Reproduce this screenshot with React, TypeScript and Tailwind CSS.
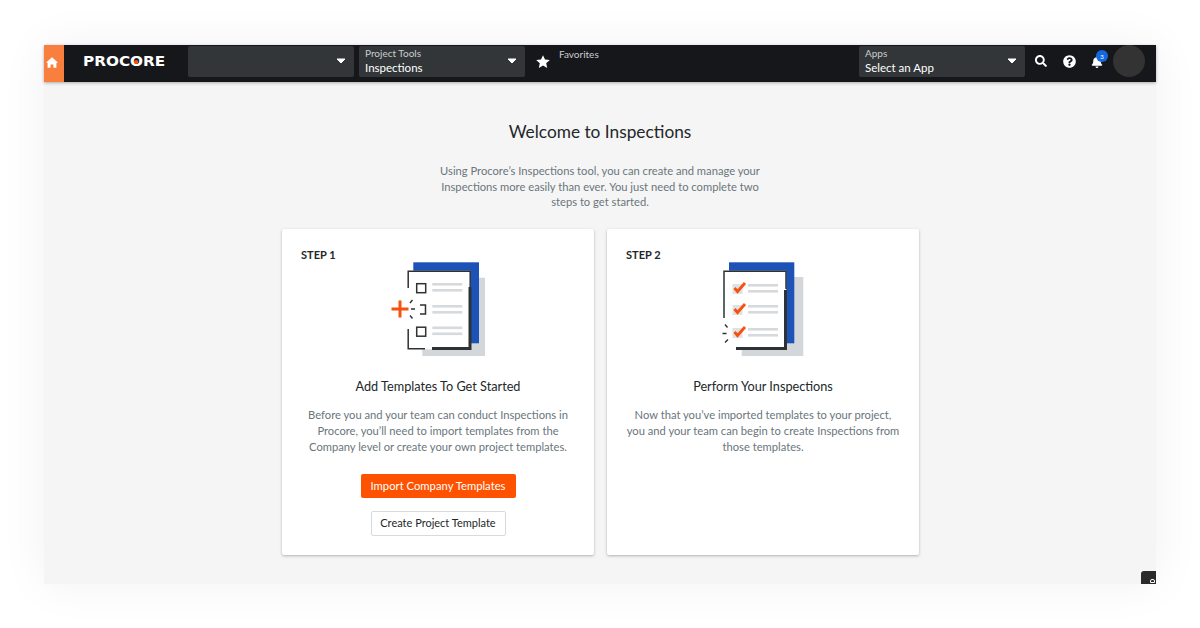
import { FaBell, FaQuestionCircle, FaSearch } from 'react-icons/fa';

const Caret = () => (
  <svg width="10" height="6" viewBox="0 0 10 6" className="shrink-0">
    <path d="M1 1H9L5 5Z" fill="#ffffff" stroke="#ffffff" strokeWidth="1" strokeLinejoin="round" />
  </svg>
);

const Selector = ({ label, value, className }: { label?: string; value?: string; className: string }) => (
  <div className={`flex h-[31px] w-[166px] shrink-0 items-center justify-between rounded-[2px] bg-[#333638] pl-[6px] pr-[8px] ${className}`}>
    <div className="flex flex-col text-white">
      {label && <span className="text-[10px] leading-[11px] text-[#c9cdcf]">{label}</span>}
      {value && <span className="mt-[1px] text-[11.5px] leading-[15px]">{value}</span>}
    </div>
    <Caret />
  </div>
);

const PaperLines = ({ x, ys }: { x: number; ys: number[] }) => (
  <g fill="#d6dadc">
    {ys.map((y) => (
      <g key={y}>
        <rect x={x} y={y} width="30" height="2.6" />
        <rect x={x} y={y + 6} width="30" height="2.6" />
      </g>
    ))}
  </g>
);

const AddIllustration = () => (
  <svg width="115" height="110" viewBox="0 0 115 110" className="mr-[2px] mt-[-7px] block self-center">
    <rect x="42.3" y="22.7" width="62.7" height="78.3" fill="#d3d7da" />
    <rect x="33.3" y="7.3" width="65.7" height="81" fill="#1d52b7" />
    <rect x="27.7" y="15.7" width="63" height="78.6" fill="#ffffff" />
    <path d="M28.2 33V16.2H90.2V32" fill="none" stroke="#2e3235" strokeWidth="1.5" />
    <path d="M28.2 74V93.8H45" fill="none" stroke="#2e3235" strokeWidth="1.5" />
    <path d="M52 93.5H90V32" fill="none" stroke="#2e3235" strokeWidth="3" />
    <rect x="36.7" y="28.7" width="9" height="9" fill="none" stroke="#2e3235" strokeWidth="1.5" />
    <rect x="36.7" y="72.2" width="9" height="9" fill="none" stroke="#2e3235" strokeWidth="1.5" />
    <path d="M40 50H45.5V59H40" fill="none" stroke="#2e3235" strokeWidth="1.5" />
    <PaperLines x={52.3} ys={[28, 50, 71.5]} />
    <path d="M11.5 54H28.5M20 45.5V62.5" stroke="#f9500d" strokeWidth="3" fill="none" />
    <path d="M30 48L32.5 45M31 54H35M30 60.5L32.5 63.5" stroke="#2e3235" strokeWidth="1.4" fill="none" />
  </svg>
);

const CheckRow = ({ y }: { y: number }) => (
  <g>
    <rect x="22.5" y={y} width="10" height="10" fill="#dfe2e4" />
    <path d={`M24.5 ${y + 4}L27.5 ${y + 7.5}L35 ${y - 1}`} fill="none" stroke="#f9500d" strokeWidth="2.8" />
  </g>
);

const PerformIllustration = () => (
  <svg width="105" height="110" viewBox="0 0 105 110" className="mr-[2px] mt-[-7px] block self-center">
    <rect x="31.7" y="22" width="61.6" height="79" fill="#d3d7da" />
    <rect x="19" y="7.3" width="65.3" height="81" fill="#1d52b7" />
    <rect x="13.3" y="15.7" width="63" height="78.6" fill="#ffffff" />
    <path d="M14 63V16.2H76V34" fill="none" stroke="#2e3235" strokeWidth="1.5" />
    <path d="M26 93.5H75.5V35" fill="none" stroke="#2e3235" strokeWidth="3" />
    <CheckRow y={29} />
    <CheckRow y={50} />
    <CheckRow y={73} />
    <PaperLines x={38} ys={[29, 50, 73]} />
    <path d="M15 69.5L17.5 72.5M12.5 78.5H16.5M15 87.5L18 84.5" stroke="#2e3235" strokeWidth="1.4" fill="none" />
  </svg>
);

const StepCard = ({ step, children }: { step: string; children: React.ReactNode }) => (
  <div className="flex h-[326px] w-[312px] flex-col rounded-[2px] bg-white pt-[19px] shadow-[0_1px_3px_rgba(0,0,0,0.28)]">
    <span className="h-[14px] pl-[19px] text-[11px] font-bold leading-[14px] text-[#232729]">{step}</span>
    {children}
  </div>
);

const CardText = ({ title, children }: { title: string; children: React.ReactNode }) => (
  <>
    <div className="mt-[12px] text-center text-[12.7px] leading-[18px] text-[#232729]">{title}</div>
    <p className="mt-[12px] px-[18px] text-center text-[11.2px] leading-[16px] text-[#6a767c]">{children}</p>
  </>
);

export default function App() {
  return (
    <div className="h-[628px] w-[1200px] overflow-hidden bg-white px-[44px] pt-[45px] font-['Lato','Open_Sans',sans-serif]">
      <div className="relative flex h-[539px] w-[1112px] flex-col bg-[#f5f5f5] shadow-[0_0_45px_rgba(0,0,0,0.06)]">
        {/* top nav */}
        <header className="flex h-[37px] shrink-0 bg-[#16171b] shadow-[0_1px_3px_rgba(0,0,0,0.3)]">
          <div className="flex h-full w-[20px] shrink-0 items-center bg-[#f97f3f] pb-[3px] pl-[2px]">
            <svg width="12" height="11" viewBox="0 0 12 11">
              <path d="M6 0.3L11.8 5.6L10.4 5.9V10.7H7.4V7.6H4.6V10.7H1.6V5.9L0.2 5.6Z" fill="#ffffff" />
            </svg>
          </div>
          <div className="flex min-w-0 flex-1 items-center pb-[5px]">
            <div className="flex w-[124px] shrink-0 pl-[19px] pt-[2px]">
              <span className="flex origin-left scale-x-[1.13] items-center font-['DejaVu_Sans',sans-serif] text-[13.5px] font-bold leading-none text-white">
                PROC
                <span className="relative">
                  O
                  <span className="absolute left-1/2 top-1/2 h-[4px] w-[4px] -translate-x-1/2 -translate-y-1/2 rounded-full bg-[#f9500d]" />
                </span>
                RE
              </span>
            </div>
            <Selector className="" />
            <Selector className="ml-[5px]" label="Project Tools" value="Inspections" />
            <svg width="14" height="13" viewBox="0 0 14 13" className="ml-[11px] shrink-0">
              <path d="M7 0.2L9 4.6L13.8 5.1L10.2 8.3L11.2 13L7 10.6L2.8 13L3.8 8.3L0.2 5.1L5 4.6Z" fill="#ffffff" />
            </svg>
            <span className="ml-[9px] self-start pt-[3px] text-[10px] leading-[12px] text-[#c9cdcf]">Favorites</span>
            <Selector className="ml-auto" label="Apps" value="Select an App" />
            <FaSearch className="ml-[10px] shrink-0 text-[12px] text-white" />
            <FaQuestionCircle className="ml-[16px] shrink-0 text-[13px] text-white" />
            <div className="relative ml-[15px] mt-[2px] shrink-0">
              <FaBell className="text-[12px] text-white" />
              <span className="absolute left-[5px] top-[-6px] flex h-[12px] w-[12px] items-center justify-center rounded-full bg-[#1469e0] text-[6px] text-white">3</span>
            </div>
            <div className="ml-[10px] mr-[11px] h-[32px] w-[32px] shrink-0 rounded-full bg-[#333333]" />
          </div>
        </header>

        {/* welcome content */}
        <main className="flex flex-1 flex-col items-center">
          <h1 className="mt-[38px] text-[17.3px] leading-[24px] text-[#232729]">Welcome to Inspections</h1>
          <p className="mt-[19px] w-[340px] text-center text-[11.2px] leading-[15.5px] text-[#6a767c]">
            Using Procore’s Inspections tool, you can create and manage your Inspections more easily than ever. You just need to complete two steps to get started.
          </p>
          <div className="ml-[1px] mt-[19px] flex gap-[13px]">
            <StepCard step="STEP 1">
              <AddIllustration />
              <CardText title="Add Templates To Get Started">
                Before you and your team can conduct Inspections in Procore, you’ll need to import templates from the Company level or create your own project templates.
              </CardText>
              <button className="mt-[19px] h-[24px] w-[155px] self-center rounded-[2px] bg-[#ff5200] pt-[1px] text-[11.25px] text-white">
                Import Company Templates
              </button>
              <button className="mt-[13px] h-[25px] w-[135px] self-center rounded-[2px] border border-[#d6dadc] bg-white pt-[1px] text-[11px] text-[#232729]">
                Create Project Template
              </button>
            </StepCard>
            <StepCard step="STEP 2">
              <PerformIllustration />
              <CardText title="Perform Your Inspections">
                Now that you’ve imported templates to your project, you and your team can begin to create Inspections from those templates.
              </CardText>
            </StepCard>
          </div>
        </main>

        {/* clipped chat widget */}
        <div className="absolute bottom-0 right-0 flex h-[13px] w-[15px] items-end justify-end rounded-tl-[3px] bg-[#2a2a2a] pr-[1px]">
          <span className="mb-[1px] h-[4px] w-[5px] rounded-t-[2px] border border-white" />
        </div>
      </div>
    </div>
  );
}
